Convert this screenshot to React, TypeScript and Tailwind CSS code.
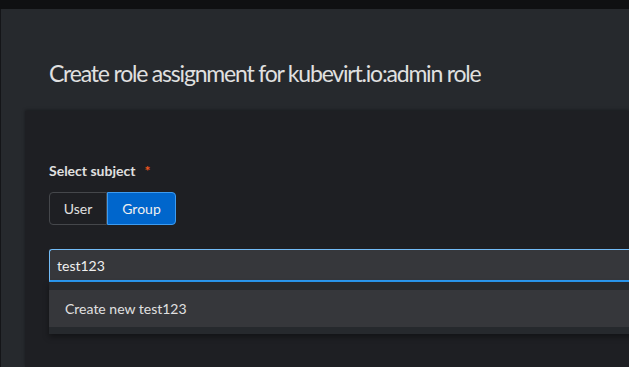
import React from "react";

export default function App() {
  const font = { fontFamily: "Lato, 'Open Sans', sans-serif" };
  return (
    <div
      className="w-[629px] h-[367px] overflow-hidden bg-[#0f1012] flex flex-col"
      style={font}
    >
      <div className="h-[9px] shrink-0" />
      <div className="flex flex-1 min-h-0">
        <div className="w-px shrink-0 bg-[#141518]" />
        <div className="flex-1 flex flex-col bg-[#26292d] min-w-0">
          <div className="h-[102px] shrink-0 pl-[48px] pt-[47px]">
            <h1 className="text-[23px] leading-[34px] tracking-[-1.2px] text-[#e0e0e0] whitespace-nowrap">
              Create role assignment for kubevirt.io:admin role
            </h1>
          </div>
          <div className="flex flex-1 min-h-0">
            <div className="w-[24px] shrink-0" />
            <div className="flex-1 bg-[#1e1f23] shadow-[0_-1px_3px_rgba(0,0,0,0.35)] pl-[24px] pt-[49px] overflow-hidden">
              <div className="flex items-center gap-[6px] text-[14px] leading-[21px] font-bold text-[#e0e0e0]">
                <span>Select subject</span>
                <span className="text-[#f0561d] ml-[3px]">*</span>
              </div>
              <div className="mt-[11px] flex h-[33px] text-[14px] w-fit">
                <button className="w-[58px] h-full rounded-l-[4px] border border-[#45474b] text-[#e0e0e0] bg-transparent">
                  User
                </button>
                <button className="w-[69px] h-full rounded-r-[4px] border border-[#3d9bf0] bg-[#0066cc] text-[#f0f0f0]">
                  Group
                </button>
              </div>
              <div className="relative mt-[24px] w-[620px]">
                <div className="h-[33px] bg-[#36373b] rounded-t-[3px] border-t border-l border-[#73bcf7] border-b-2 border-b-[#2b9af3] flex items-center pl-[7px] text-[14px] text-[#f0f0f0]">
                  test123
                </div>
                <div className="absolute left-0 top-[33px] w-full bg-[#26292d] pt-[8px] pb-[7px] shadow-[0_3px_6px_rgba(0,0,0,0.4)]">
                  <div className="h-[37px] bg-[#36373b] flex items-center pl-[16px] text-[14px] text-[#e0e0e0]">
                    Create new test123
                  </div>
                </div>
              </div>
            </div>
          </div>
        </div>
      </div>
    </div>
  );
}
